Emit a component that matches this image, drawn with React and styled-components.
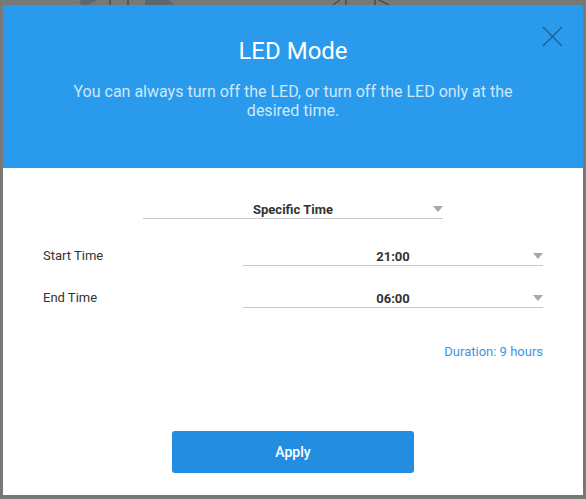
import React from "react";
import styled, { createGlobalStyle } from "styled-components";

const GlobalStyle = createGlobalStyle`
  html, body {
    margin: 0;
    padding: 0;
    background: #787878;
    font-family: Roboto, "Liberation Sans", Arial, sans-serif;
  }
`;

const Page = styled.div`
  width: 586px;
  height: 499px;
  padding: 0 3px;
  box-sizing: border-box;
  overflow: hidden;
`;

const Backdrop = styled.svg`
  display: block;
  width: 580px;
  height: 5px;
`;

const Dialog = styled.div`
  width: 580px;
  height: 490px;
  background: #ffffff;
  display: flex;
  flex-direction: column;
`;

const Header = styled.div`
  position: relative;
  height: 163px;
  box-sizing: border-box;
  background: #2a9bec;
  padding: 32px 60px 0;
  text-align: center;
`;

const Title = styled.h1`
  margin: 0;
  font-size: 24px;
  line-height: 28px;
  font-weight: 400;
  color: #ffffff;
`;

const Subtitle = styled.p`
  margin: 17px 0 0;
  font-size: 16px;
  line-height: 19px;
  color: #cfe7fa;
`;

const CloseButton = styled.button`
  position: absolute;
  top: 21px;
  right: 20px;
  width: 21px;
  height: 21px;
  padding: 0;
  border: none;
  background: transparent;
  cursor: pointer;
  svg {
    display: block;
  }
`;

const Body = styled.div`
  flex: 1;
  display: flex;
  flex-direction: column;
  padding: 32px 40px 22px;
`;

const ModeRow = styled.div`
  display: flex;
  justify-content: center;
`;

const Form = styled.div`
  display: flex;
  flex-direction: column;
  gap: 23px;
  margin-top: 28px;
`;

const FieldRow = styled.div`
  display: flex;
  align-items: center;
  justify-content: space-between;
`;

const Label = styled.span`
  font-size: 13px;
  color: #333333;
  margin-top: -2px;
`;

const Select = styled.div`
  width: ${(p) => p.$width}px;
  height: 18px;
  display: flex;
  align-items: center;
  border-bottom: 1px solid #c8c8c8;
  font-size: 13px;
  font-weight: 700;
  color: #333333;
  cursor: pointer;
`;

const SelectValue = styled.span`
  flex: 1;
  text-align: center;
  padding-left: 10px;
`;

const Caret = styled.span`
  width: 0;
  height: 0;
  border-left: 5px solid transparent;
  border-right: 5px solid transparent;
  border-top: 6px solid #a8a8a8;
`;

const Duration = styled.div`
  margin-top: 36px;
  text-align: right;
  font-size: 13px;
  color: #3e95e0;
`;

const ApplyButton = styled.button`
  align-self: center;
  margin-top: auto;
  width: 242px;
  height: 42px;
  border: none;
  border-radius: 3px;
  background: #238ee1;
  color: #ffffff;
  font-family: inherit;
  font-size: 14px;
  font-weight: 500;
  cursor: pointer;
`;

const SelectBox = ({ value, width }) => (
  <Select $width={width}>
    <SelectValue>{value}</SelectValue>
    <Caret />
  </Select>
);

export default function App() {
  return (
    <>
      <GlobalStyle />
      <Page>
        <Backdrop viewBox="0 0 580 5">
          <path d="M79 5 Q86 -2 95 -4" stroke="#5c6770" strokeWidth="8" fill="none" />
          <line x1="107" y1="0" x2="107" y2="5" stroke="#333" strokeWidth="1" />
          <line x1="125" y1="0" x2="125" y2="5" stroke="#333" strokeWidth="1" />
          <path d="M142 5 L142 -2 L160 -2 Q168 0 171 5 Z" fill="#5c6770" />
          <line x1="330" y1="5" x2="338" y2="-1" stroke="#333" strokeWidth="1" />
          <line x1="343" y1="0" x2="343" y2="5" stroke="#333" strokeWidth="1" />
          <line x1="372" y1="0" x2="372" y2="5" stroke="#333" strokeWidth="1" />
          <line x1="374" y1="-1" x2="386" y2="5" stroke="#333" strokeWidth="1" />
        </Backdrop>
        <Dialog>
          <Header>
            <Title>LED Mode</Title>
            <Subtitle>
              You can always turn off the LED, or turn off the LED only at the
              desired time.
            </Subtitle>
            <CloseButton aria-label="Close">
              <svg width="21" height="21" viewBox="0 0 21 21">
                <path
                  d="M1 1 L20 20 M20 1 L1 20"
                  stroke="#1c5d90"
                  strokeWidth="1.2"
                  fill="none"
                />
              </svg>
            </CloseButton>
          </Header>
          <Body>
            <ModeRow>
              <SelectBox value="Specific Time" width={300} />
            </ModeRow>
            <Form>
              <FieldRow>
                <Label>Start Time</Label>
                <SelectBox value="21:00" width={300} />
              </FieldRow>
              <FieldRow>
                <Label>End Time</Label>
                <SelectBox value="06:00" width={300} />
              </FieldRow>
            </Form>
            <Duration>Duration: 9 hours</Duration>
            <ApplyButton>Apply</ApplyButton>
          </Body>
        </Dialog>
      </Page>
    </>
  );
}
